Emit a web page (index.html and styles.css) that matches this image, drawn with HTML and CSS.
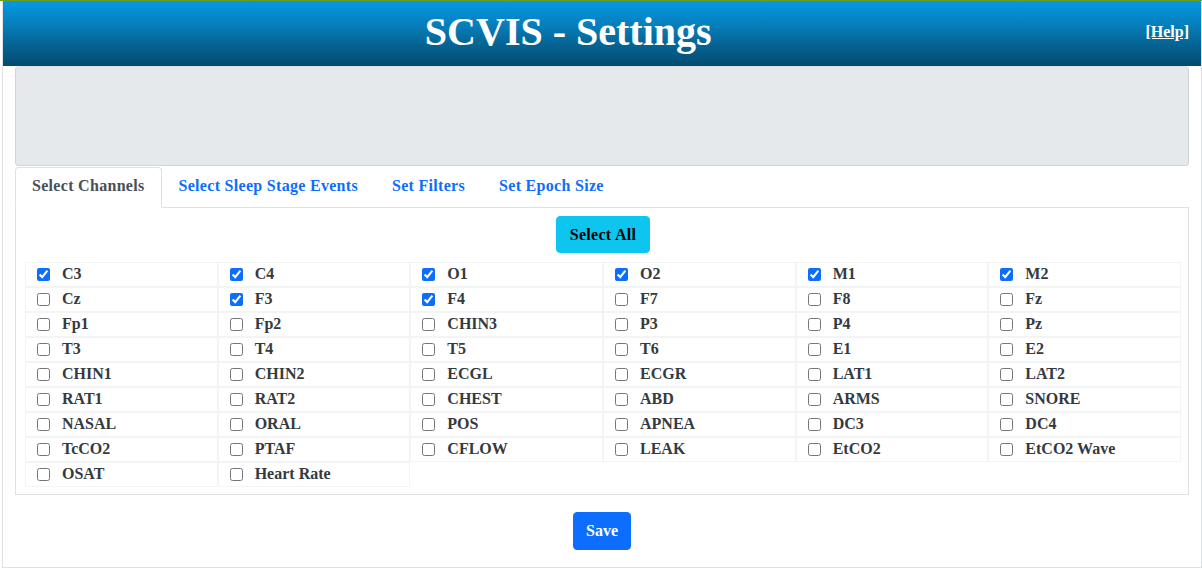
FILE: index.html
```html
<!DOCTYPE html>
<html lang="en">
<head>
<meta charset="utf-8">
<title>SCVIS - Settings</title>
<link rel="stylesheet" href="styles.css">
</head>
<body>
<div class="topline"></div>
<div class="page">
  <header class="header">
    <h1 class="title">SCVIS - Settings</h1>
    <div class="help"><a href="#">[Help]</a></div>
  </header>
  <main class="content">
    <div class="infobox"></div>
    <ul class="tabs">
      <li class="tab active">Select Channels</li>
      <li class="tab">Select Sleep Stage Events</li>
      <li class="tab">Set Filters</li>
      <li class="tab">Set Epoch Size</li>
    </ul>
    <section class="panel">
      <div class="center"><button class="btn btn-info">Select All</button></div>
      <div class="grid">
        <label class="cell"><input type="checkbox" checked><span>C3</span></label>
        <label class="cell"><input type="checkbox" checked><span>C4</span></label>
        <label class="cell"><input type="checkbox" checked><span>O1</span></label>
        <label class="cell"><input type="checkbox" checked><span>O2</span></label>
        <label class="cell"><input type="checkbox" checked><span>M1</span></label>
        <label class="cell"><input type="checkbox" checked><span>M2</span></label>
        <label class="cell"><input type="checkbox"><span>Cz</span></label>
        <label class="cell"><input type="checkbox" checked><span>F3</span></label>
        <label class="cell"><input type="checkbox" checked><span>F4</span></label>
        <label class="cell"><input type="checkbox"><span>F7</span></label>
        <label class="cell"><input type="checkbox"><span>F8</span></label>
        <label class="cell"><input type="checkbox"><span>Fz</span></label>
        <label class="cell"><input type="checkbox"><span>Fp1</span></label>
        <label class="cell"><input type="checkbox"><span>Fp2</span></label>
        <label class="cell"><input type="checkbox"><span>CHIN3</span></label>
        <label class="cell"><input type="checkbox"><span>P3</span></label>
        <label class="cell"><input type="checkbox"><span>P4</span></label>
        <label class="cell"><input type="checkbox"><span>Pz</span></label>
        <label class="cell"><input type="checkbox"><span>T3</span></label>
        <label class="cell"><input type="checkbox"><span>T4</span></label>
        <label class="cell"><input type="checkbox"><span>T5</span></label>
        <label class="cell"><input type="checkbox"><span>T6</span></label>
        <label class="cell"><input type="checkbox"><span>E1</span></label>
        <label class="cell"><input type="checkbox"><span>E2</span></label>
        <label class="cell"><input type="checkbox"><span>CHIN1</span></label>
        <label class="cell"><input type="checkbox"><span>CHIN2</span></label>
        <label class="cell"><input type="checkbox"><span>ECGL</span></label>
        <label class="cell"><input type="checkbox"><span>ECGR</span></label>
        <label class="cell"><input type="checkbox"><span>LAT1</span></label>
        <label class="cell"><input type="checkbox"><span>LAT2</span></label>
        <label class="cell"><input type="checkbox"><span>RAT1</span></label>
        <label class="cell"><input type="checkbox"><span>RAT2</span></label>
        <label class="cell"><input type="checkbox"><span>CHEST</span></label>
        <label class="cell"><input type="checkbox"><span>ABD</span></label>
        <label class="cell"><input type="checkbox"><span>ARMS</span></label>
        <label class="cell"><input type="checkbox"><span>SNORE</span></label>
        <label class="cell"><input type="checkbox"><span>NASAL</span></label>
        <label class="cell"><input type="checkbox"><span>ORAL</span></label>
        <label class="cell"><input type="checkbox"><span>POS</span></label>
        <label class="cell"><input type="checkbox"><span>APNEA</span></label>
        <label class="cell"><input type="checkbox"><span>DC3</span></label>
        <label class="cell"><input type="checkbox"><span>DC4</span></label>
        <label class="cell"><input type="checkbox"><span>TcCO2</span></label>
        <label class="cell"><input type="checkbox"><span>PTAF</span></label>
        <label class="cell"><input type="checkbox"><span>CFLOW</span></label>
        <label class="cell"><input type="checkbox"><span>LEAK</span></label>
        <label class="cell"><input type="checkbox"><span>EtCO2</span></label>
        <label class="cell"><input type="checkbox"><span>EtCO2 Wave</span></label>
        <label class="cell"><input type="checkbox"><span>OSAT</span></label>
        <label class="cell"><input type="checkbox"><span>Heart Rate</span></label>
      </div>
    </section>
    <div class="center save-row"><button class="btn btn-primary">Save</button></div>
  </main>
</div>
</body>
</html>
```

FILE: styles.css
```css
* { box-sizing: border-box; }
html, body { margin: 0; padding: 0; background: #fff; }
body {
  font-family: "Liberation Serif", "Times New Roman", serif;
  font-size: 16px;
  font-weight: bold;
  line-height: 1.5;
  color: #333;
}
.topline { height: 1px; background: #6a9a1f; }
.page {
  margin-left: 2px;
  width: 1200px;
  height: 567px;
  border: 1px solid #dee2e6;
  border-top: none;
}
.header {
  height: 65px;
  display: flex;
  align-items: center;
  background: linear-gradient(to bottom, #0499e2 0%, #0680bd 35%, #05618f 70%, #044b70 100%);
}
.title {
  flex: 1;
  margin: 0;
  text-align: center;
  font-size: 40px;
  line-height: 1;
  color: #fff;
  font-weight: bold;
  padding-bottom: 3px;
}
.help { padding: 0 12px 3px 12px; }
.help a { color: #fff; font-size: 16px; }
.content { padding: 0 12px; }
.infobox {
  height: 100px;
  background: #e6e9ec;
  border: 1px solid #ced4da;
  border-top-color: #dfe3e6;
  border-radius: 4px;
}
.tabs {
  list-style: none;
  margin: 1px 0 0;
  padding: 0;
  display: flex;
  border-bottom: 1px solid #dee2e6;
}
.tab {
  padding: 6px 16px 9px 16px;
  margin-bottom: -1px;
  border: 1px solid transparent;
  border-radius: 4px 4px 0 0;
  color: #0d6efd;
  letter-spacing: 0.3px;
}
.tab.active {
  color: #495057;
  background: #fff;
  border-color: #dee2e6 #dee2e6 #fff;
}
.panel {
  border: 1px solid #dee2e6;
  border-top: none;
  padding: 8px 7px 7px 9px;
}
.center { display: flex; justify-content: center; }
.btn {
  font-family: inherit;
  font-size: 16px;
  font-weight: bold;
  line-height: 24px;
  border-radius: 4px;
  border: 1px solid transparent;
  padding: 6px 13px 5px;
  cursor: pointer;
}
.btn-info { background: #0dc5ee; border-color: #0dc5ee; color: #000; letter-spacing: 0.3px; padding: 6px 13px 5px; }
.btn-primary { background: #0d6efd; border-color: #0d6efd; color: #fff; padding: 6px 12px; }
.grid {
  margin-top: 9px;
  display: grid;
  grid-template-columns: repeat(6, 1fr);
}
.cell {
  height: 25px;
  display: flex;
  align-items: center;
  gap: 12px;
  padding-left: 11px;
  padding-bottom: 1px;
  border: 1px solid #f3f4f5;
  font-size: 16px;
  color: #343a40;
  white-space: nowrap;
}
.cell input {
  margin: 1px 0 0;
  width: 13px;
  height: 13px;
  accent-color: #0d6efd;
}
.save-row { margin-top: 17px; }
```
